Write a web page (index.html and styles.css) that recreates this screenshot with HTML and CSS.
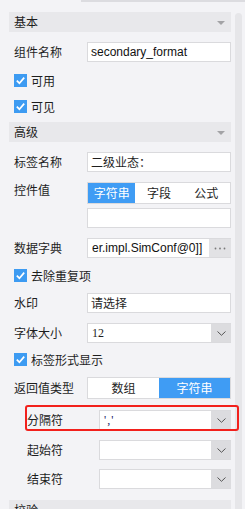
FILE: index.html
```html
<!DOCTYPE html>
<html>
<head>
<meta charset="utf-8">
<link rel="stylesheet" href="styles.css">
</head>
<body>
<div class="topbar"></div>
<div class="main">
  <div class="content">
    <div class="hdr"><span>基本</span><i class="tri"></i></div>
    <div class="row mt10"><span class="label">组件名称</span><div class="input latin">secondary_format</div></div>
    <div class="check mt8"><svg class="cb" width="13" height="13" viewBox="0 0 13 13"><rect width="13" height="13" fill="#3d9bf2"/><path d="M2.8 6.6 L5.4 9.2 L10.2 3.6" fill="none" stroke="#fff" stroke-width="1.7"/></svg><span>可用</span></div>
    <div class="check mt6"><svg class="cb" width="13" height="13" viewBox="0 0 13 13"><rect width="13" height="13" fill="#3d9bf2"/><path d="M2.8 6.6 L5.4 9.2 L10.2 3.6" fill="none" stroke="#fff" stroke-width="1.7"/></svg><span>可见</span></div>
    <div class="hdr mt6"><span>高级</span><i class="tri"></i></div>
    <div class="row mt10"><span class="label">标签名称</span><div class="input">二级业态：</div></div>
    <div class="row top mt10"><span class="label lbl-top">控件值</span>
      <div class="seg three"><span class="on">字符串</span><span>字段</span><span>公式</span></div>
    </div>
    <div class="row mt4"><span class="label"></span><div class="input"></div></div>
    <div class="row mt10"><span class="label">数据字典</span><div class="input with-btn"><span class="val latin">er.impl.SimConf@0]]</span><span class="btn dots"><svg width="12" height="3" viewBox="0 0 12 3"><circle cx="1.5" cy="1.5" r="0.9" fill="#7a7a7a"/><circle cx="6" cy="1.5" r="0.9" fill="#7a7a7a"/><circle cx="10.5" cy="1.5" r="0.9" fill="#7a7a7a"/></svg></span></div></div>
    <div class="check mt7"><svg class="cb" width="13" height="13" viewBox="0 0 13 13"><rect width="13" height="13" fill="#3d9bf2"/><path d="M2.8 6.6 L5.4 9.2 L10.2 3.6" fill="none" stroke="#fff" stroke-width="1.7"/></svg><span>去除重复项</span></div>
    <div class="row mt8"><span class="label">水印</span><div class="input">请选择</div></div>
    <div class="row mt10"><span class="label">字体大小</span><div class="input with-btn"><span class="val serif">12</span><span class="btn"><svg width="9" height="5" viewBox="0 0 9 5"><path d="M0.5 0.5 L4.5 4.3 L8.5 0.5" fill="none" stroke="#555" stroke-width="1"/></svg></span></div></div>
    <div class="check mt6"><svg class="cb" width="13" height="13" viewBox="0 0 13 13"><rect width="13" height="13" fill="#3d9bf2"/><path d="M2.8 6.6 L5.4 9.2 L10.2 3.6" fill="none" stroke="#fff" stroke-width="1.7"/></svg><span>标签形式显示</span></div>
    <div class="row mt8 tall"><span class="label">返回值类型</span>
      <div class="seg two"><span>数组</span><span class="on">字符串</span></div>
    </div>
    <div class="row sub mt11 marked"><span class="label">分隔符</span><div class="input with-btn"><span class="val serif quote">','</span><span class="btn"><svg width="9" height="5" viewBox="0 0 9 5"><path d="M0.5 0.5 L4.5 4.3 L8.5 0.5" fill="none" stroke="#555" stroke-width="1"/></svg></span></div><div class="highlight"></div></div>
    <div class="row sub mt10"><span class="label">起始符</span><div class="input with-btn"><span class="val"></span><span class="btn"><svg width="9" height="5" viewBox="0 0 9 5"><path d="M0.5 0.5 L4.5 4.3 L8.5 0.5" fill="none" stroke="#555" stroke-width="1"/></svg></span></div></div>
    <div class="row sub mt9"><span class="label">结束符</span><div class="input with-btn"><span class="val"></span><span class="btn"><svg width="9" height="5" viewBox="0 0 9 5"><path d="M0.5 0.5 L4.5 4.3 L8.5 0.5" fill="none" stroke="#555" stroke-width="1"/></svg></span></div></div>
    <div class="hdr mt11"><span>校验</span><i class="tri"></i></div>
  </div>
  <div class="scrollbar"></div>
</div>
</body>
</html>
```
FILE: styles.css
```css
html, body {
  margin: 0;
  padding: 0;
}
body {
  width: 245px;
  height: 509px;
  overflow: hidden;
  background: #f3f3f6;
  font-family: "Noto Sans CJK SC", "Liberation Sans", sans-serif;
  font-size: 12px;
  color: #1e1e1e;
}
.topbar {
  height: 2px;
  margin-left: 81px;
  background: #dcdce0;
}
.main {
  display: flex;
  align-items: flex-start;
  gap: 4px;
  padding-left: 9px;
  margin-top: 10px;
}
.content {
  width: 222px;
  flex: none;
  display: flex;
  flex-direction: column;
}
.scrollbar {
  width: 7px;
  height: 496px;
  margin-top: 1px;
  background: #e6e6e9;
  border-radius: 4px 4px 0 0;
  flex: none;
}
.hdr {
  height: 20px;
  background: #e8e8eb;
  display: flex;
  align-items: center;
  justify-content: space-between;
  padding: 0 6px 0 5px;
  line-height: 20px;
}
.tri {
  width: 0;
  height: 0;
  border-left: 4px solid transparent;
  border-right: 4px solid transparent;
  border-top: 4px solid #a3a3a6;
  margin-top: 2px;
}
.row {
  display: flex;
  align-items: center;
  height: 20px;
  position: relative;
}
.row.top {
  align-items: flex-start;
  height: 22px;
}
.row.tall {
  height: 22px;
}
.label {
  width: 78px;
  flex: none;
  padding-left: 5px;
  box-sizing: border-box;
  white-space: nowrap;
  line-height: 20px;
}
.lbl-top {
  line-height: 16px;
}
.row.sub .label {
  width: 90px;
  padding-left: 18px;
}
.input {
  flex: 1;
  height: 20px;
  box-sizing: border-box;
  background: #fff;
  border: 1px solid #dadadd;
  padding-left: 3px;
  line-height: 18px;
  white-space: nowrap;
  overflow: hidden;
  display: flex;
  align-items: center;
}
.latin {
  font-family: "Liberation Sans", sans-serif;
  font-size: 12px;
  color: #111;
}
.serif {
  font-family: "Liberation Serif", serif;
  font-size: 12px;
}
.quote {
  color: #1a1a66;
  padding-left: 1px;
  letter-spacing: 1px;
}
.input.with-btn {
  padding-right: 0;
  border-right: none;
}
.val {
  flex: 1;
  overflow: hidden;
  white-space: nowrap;
  padding-left: 1px;
}
.btn {
  width: 20px;
  height: 20px;
  margin-top: -1px;
  margin-bottom: -1px;
  flex: none;
  background: #dcdcdf;
  display: flex;
  align-items: center;
  justify-content: center;
}
.btn.dots {
  width: 22px;
  background: #e2e2e5;
}
.check {
  display: flex;
  align-items: center;
  height: 20px;
  padding-left: 5px;
  gap: 4px;
}
.cb {
  flex: none;
  display: block;
}
.seg {
  flex: 1;
  height: 22px;
  box-sizing: border-box;
  border: 1px solid #dadadd;
  background: #fff;
  display: grid;
}
.seg.three {
  grid-template-columns: 1fr 1fr 1fr;
}
.seg.two {
  grid-template-columns: 1fr 1fr;
}
.seg span {
  display: flex;
  align-items: center;
  justify-content: center;
  line-height: 20px;
}
.seg span.on {
  background: #3f9cf4;
  color: #fff;
}
.highlight {
  position: absolute;
  left: 16px;
  right: -8px;
  top: -5px;
  bottom: -1px;
  border: 2px solid #f2201c;
  border-radius: 3px;
  pointer-events: none;
}
.mt4 { margin-top: 4px; }
.mt6 { margin-top: 6px; }
.mt7 { margin-top: 7px; }
.mt8 { margin-top: 8px; }
.mt9 { margin-top: 9px; }
.mt10 { margin-top: 10px; }
.mt11 { margin-top: 11px; }
```
